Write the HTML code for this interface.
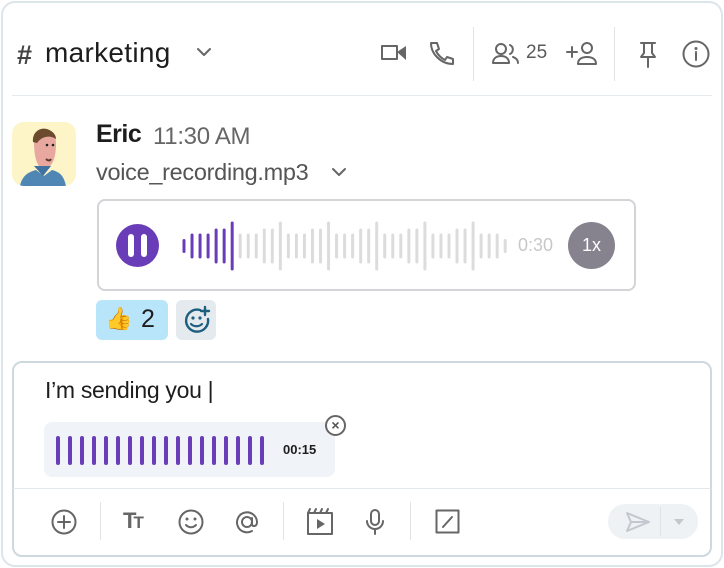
<!DOCTYPE html>
<html><head><meta charset="utf-8"><style>
*{margin:0;padding:0;box-sizing:border-box}
body{width:724px;height:568px;background:#fff;font-family:"Liberation Sans",sans-serif;position:relative;overflow:hidden}
.a{position:absolute}
svg{position:absolute;overflow:visible}
.ic{fill:none;stroke:#666;stroke-width:2;stroke-linecap:round;stroke-linejoin:round}
</style></head><body>
<div class="a" style="left:1px;top:1px;width:722px;height:566px;border:2px solid #dbe5ea;border-radius:14px"></div>

<div class="a" style="left:17px;top:40px;font-size:27px;color:#444;font-weight:bold">#</div>
<div class="a" style="left:45px;top:37px;font-size:28px;color:#1d1d1d;font-weight:500;letter-spacing:0.3px">marketing</div>
<svg style="left:196px;top:47px" width="16" height="10"><path d="M2 2l6 6 6-6" class="ic"/></svg>

<svg style="left:380px;top:42px" width="28" height="22"><rect x="1" y="3" width="17" height="15" rx="1" fill="#666"/><path d="M17 10l9-6v14z" fill="#666"/><rect x="3" y="5" width="13" height="11" fill="#fff"/></svg>
<svg style="left:428px;top:40px" width="28" height="28"><path d="M3 3h6l2 6-3 2c2 4 5 7 9 9l2-3 6 2v5c-12 0-22-10-22-21z" class="ic"/></svg>
<div class="a" style="left:473px;top:27px;width:1px;height:54px;background:#e3e3e3"></div>
<svg style="left:492px;top:42px" width="30" height="24"><circle cx="9" cy="7" r="5" class="ic"/><path d="M1 21c0-5 4-7 8-7s8 2 8 7z" class="ic"/><path d="M18 3a5 5 0 010 9M21 15c3 1 5 3 5 6" class="ic"/></svg>
<div class="a" style="left:526px;top:42px;font-size:19px;color:#5a5a5a">25</div>
<svg style="left:566px;top:41px" width="34" height="26"><path d="M1 11h10M6 6v10" class="ic" stroke-width="2.4"/><circle cx="21" cy="7" r="5" class="ic"/><path d="M12 23c0-5 4-7 9-7s9 2 9 7z" class="ic"/></svg>
<div class="a" style="left:614px;top:27px;width:1px;height:54px;background:#e3e3e3"></div>
<svg style="left:637px;top:41px" width="22" height="28"><path d="M4 2h14M7 2v10l-3 4h14l-3-4V2M11 16v10" class="ic"/></svg>
<svg style="left:682px;top:40px" width="28" height="28"><circle cx="14" cy="14" r="12.5" class="ic"/><circle cx="14" cy="8.5" r="1.5" fill="#666"/><path d="M14 12v8" class="ic" stroke-width="2.4"/></svg>

<div class="a" style="left:12px;top:95px;width:700px;height:1px;background:#e4eaed"></div>

<div class="a" style="left:12px;top:122px;width:64px;height:64px;border-radius:12px;background:#fdf4c7;overflow:hidden">
<svg style="left:0;top:0" width="64" height="64">
<path d="M8 64c2-10 8-14 16-16l8 6 8-6c8 2 12 6 14 16z" fill="#4f86b4"/>
<path d="M22 20c0-10 6-14 13-12 7 1 9 7 9 14 0 10-2 18-6 22-3 3-8 3-11 0-3-4-5-12-5-24z" fill="#e8a8a0"/>
<path d="M21 20c-1-10 7-15 14-13 6 2 9 6 9 10-6-4-14-3-19 4z" fill="#6b4a2e"/>
<circle cx="35" cy="23" r="1.3" fill="#222"/><circle cx="41" cy="23" r="1.3" fill="#222"/>
<path d="M34 37c2 2 4 2 5 0" stroke="#5a3a2a" stroke-width="2" fill="none"/>
<path d="M22 44l9 10 8-10" fill="#3f72a0"/>
</svg></div>

<div class="a" style="left:96px;top:120px;font-size:25px;font-weight:bold;color:#1d1d1d;letter-spacing:-0.5px">Eric</div>
<div class="a" style="left:153px;top:123px;font-size:24px;color:#666;letter-spacing:-0.3px">11:30 AM</div>
<div class="a" style="left:96px;top:159px;font-size:23.5px;color:#555;letter-spacing:-0.3px">voice_recording.mp3</div>
<svg style="left:331px;top:167px" width="16" height="10"><path d="M2 2l6 6 6-6" class="ic"/></svg>

<div class="a" style="left:97px;top:199px;width:539px;height:92px;border:2px solid #d4d4d8;border-radius:8px"></div>
<div class="a" style="left:116px;top:224px;width:43px;height:43px;border-radius:50%;background:#6a3db8"></div>
<div class="a" style="left:128px;top:234px;width:6px;height:23px;border-radius:3px;background:#fff"></div>
<div class="a" style="left:141px;top:234px;width:6px;height:23px;border-radius:3px;background:#fff"></div>
<div class="a" style="left:518px;top:235px;font-size:18px;color:#c8c8c8">0:30</div>
<div class="a" style="left:568px;top:222px;width:47px;height:47px;border-radius:50%;background:#86838f;color:#fff;font-size:18px;text-align:center;line-height:47px">1x</div>

<div class="a" style="left:96px;top:300px;width:72px;height:40px;border-radius:6px;background:#b9e5fa"></div>
<div class="a" style="left:105px;top:306px;font-size:22px">👍</div>
<div class="a" style="left:141px;top:305px;font-size:25px;color:#1d1d1d">2</div>
<div class="a" style="left:176px;top:300px;width:40px;height:40px;border-radius:6px;background:#e5eaee"></div>
<svg style="left:182px;top:305px" width="30" height="30"><path d="M18 5a11 11 0 1 0 8 9" fill="none" stroke="#1e5f80" stroke-width="2.4" stroke-linecap="round"/><path d="M23 2v8M19 6h8" stroke="#1e5f80" stroke-width="2.4" stroke-linecap="round"/><circle cx="11" cy="13" r="1.6" fill="#1e5f80"/><circle cx="18" cy="13" r="1.6" fill="#1e5f80"/><path d="M9 19c3 3 8 3 11 0" fill="none" stroke="#1e5f80" stroke-width="2.2" stroke-linecap="round"/></svg>

<div class="a" style="left:12px;top:361px;width:700px;height:196px;border:2px solid #cdd8df;border-radius:10px"></div>
<div class="a" style="left:45px;top:377px;font-size:23px;color:#1d1d1d;letter-spacing:-0.3px">I’m sending you |</div>
<div class="a" style="left:44px;top:422px;width:291px;height:55px;border-radius:8px;background:#f0f4f8"></div>
<div class="a" style="left:283px;top:442px;font-size:13px;font-weight:bold;color:#1d1d1d">00:15</div>
<div class="a" style="left:325px;top:415px;width:21px;height:21px;border-radius:50%;border:2px solid #666;background:#fff;color:#555;font-size:14px;font-weight:bold;text-align:center;line-height:16px">×</div>
<div class="a" style="left:13px;top:488px;width:698px;height:1px;background:#e3e8ec"></div>

<svg style="left:51px;top:509px" width="26" height="26"><circle cx="13" cy="13" r="11.5" class="ic"/><path d="M13 7v12M7 13h12" class="ic"/></svg>
<div class="a" style="left:100px;top:502px;width:1px;height:38px;background:#e3e3e3"></div>
<div class="a" style="left:123px;top:508px;font-size:22px;font-weight:bold;color:#666;letter-spacing:-3px">T<span style="font-size:17px">T</span></div>
<svg style="left:178px;top:509px" width="26" height="26"><circle cx="13" cy="13" r="11.5" class="ic"/><circle cx="9" cy="10" r="1.5" fill="#666"/><circle cx="17" cy="10" r="1.5" fill="#666"/><path d="M8 16c3 3 7 3 10 0" class="ic"/></svg>
<svg style="left:233px;top:508px" width="28" height="28"><circle cx="14" cy="14" r="5" class="ic"/><path d="M19 10v6c0 3 5 3 5-2a10 10 0 1 0-5 9" class="ic"/></svg>
<div class="a" style="left:283px;top:502px;width:1px;height:38px;background:#e3e3e3"></div>
<svg style="left:306px;top:508px" width="28" height="28"><rect x="2" y="5" width="24" height="21" class="ic"/><path d="M2 5l2-4M8 5l2-4M14 5l2-4M20 5l2-4" class="ic"/><path d="M11 11v10l8-5z" fill="#666"/></svg>
<svg style="left:365px;top:508px" width="20" height="28"><rect x="6" y="2" width="8" height="15" rx="4" class="ic"/><path d="M2 13a8 8 0 0 0 16 0M10 21v5" class="ic"/></svg>
<div class="a" style="left:410px;top:502px;width:1px;height:38px;background:#e3e3e3"></div>
<svg style="left:435px;top:509px" width="26" height="26"><rect x="1.5" y="1.5" width="22" height="22" class="ic"/><path d="M8 18l9-10" class="ic"/></svg>

<div class="a" style="left:608px;top:504px;width:90px;height:35px;border-radius:17px;background:#eef2f5"></div>
<div class="a" style="left:660px;top:507px;width:1px;height:29px;background:#dde3e8"></div>
<svg style="left:625px;top:511px" width="26" height="22"><path d="M2 2l22 9-22 9 4-9z M6 11h18" fill="none" stroke="#c2c8cd" stroke-width="2" stroke-linejoin="round"/></svg>
<svg style="left:673px;top:518px" width="12" height="8"><path d="M1 1h10l-5 6z" fill="#c2c8cd"/></svg>

<svg style="left:0;top:0;z-index:5" width="724" height="568" id="w"></svg>
<script>
var s=document.getElementById('w'),h='';
var H=[14,25,25,25,35,35,49,25,25,25,35,35,49,25,25,25,35,35,49,25,25,25,35,35,49,25,25,25,35,35,49,25,25,25,35,35,49,25,25,25,14];
for(var i=0;i<41;i++){var x=184+i*8.03,hh=H[i];h+='<rect x="'+(x-1.5)+'" y="'+(246-hh/2)+'" width="3" height="'+hh+'" rx="1.5" fill="'+(i<7?'#6a3db8':'#dcdcdc')+'"/>';}
for(var j=0;j<18;j++){var x2=56+j*12;h+='<rect x="'+x2+'" y="436" width="4" height="29" rx="2" fill="#6a3db8"/>';}
s.innerHTML=h;
</script>
</body></html>
